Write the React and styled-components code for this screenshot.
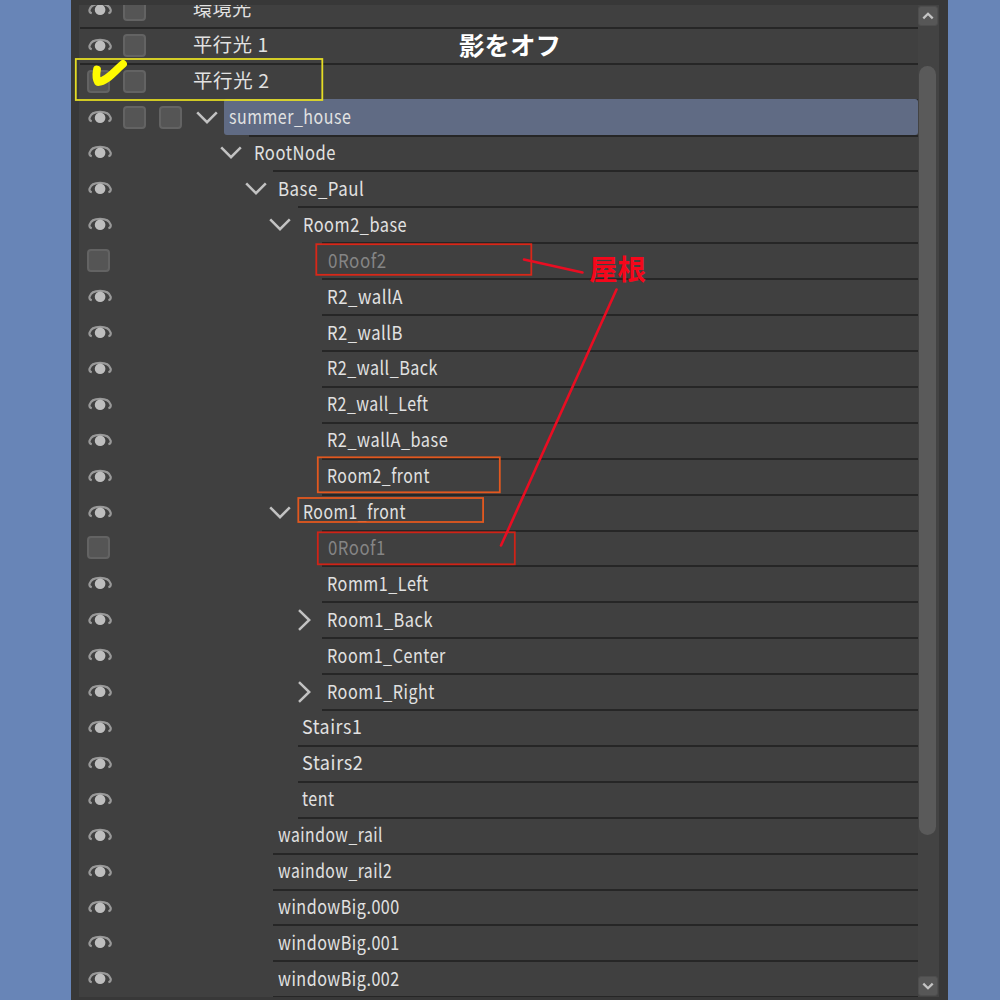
import React, { useLayoutEffect, useRef } from "react";
import styled, { createGlobalStyle } from "styled-components";

const ROW = 35.91;

const GlobalStyle = createGlobalStyle`
  html, body { margin: 0; padding: 0; background: #6885b7; }
  * { box-sizing: border-box; }
`;

const Page = styled.main`
  position: relative;
  width: 1000px;
  height: 1000px;
  overflow: hidden;
  background: #6885b7;
  padding: 0 52px 0 71px;
  font-family: "Noto Sans CJK JP", sans-serif;
`;

const Panel = styled.section`
  display: flex;
  height: 1000px;
  padding: 5px 9px 3px 8px;
  background: #383838;
`;

const Viewport = styled.div`
  flex: 1;
  overflow: hidden;
  background: #404040;
`;

const List = styled.div`
  display: flex;
  flex-direction: column;
  margin-top: -13.1px;
`;

const Row = styled.div`
  display: flex;
  flex: none;
  height: ${ROW}px;
`;

const Toggles = styled.div`
  display: flex;
  align-items: center;
  gap: 13px;
  padding: 0 0 1px 8px;
  width: ${(p) => p.$width}px;
  flex: none;
`;

const Box = styled.span`
  width: 23px;
  height: 23px;
  border: 2px solid #636363;
  border-radius: 4px;
  background: #555;
`;

const EyeIcon = styled.svg`
  width: 25px;
  height: 23px;
  margin-right: -2px;
`;

const Branch = styled.div`
  display: flex;
  align-items: center;
  justify-content: flex-end;
  width: ${(p) => p.$width}px;
  flex: none;
  padding: 0 ${(p) => (p.$fold === "right" ? 11 : 6.5)}px 1px 0;
`;

const Name = styled.div`
  position: relative;
  flex: 1;
  display: flex;
  align-items: center;
  margin: ${(p) => (p.$selected ? "-1px 0 1px" : "0")};
  padding-left: 5px;
  padding-bottom: ${(p) => (p.$selected ? 1 : 3)}px;
  border-radius: 3px;
  background: ${(p) => (p.$selected ? "#606b84" : "transparent")};
  color: ${(p) => (p.$dim ? "#858585" : "#e2e2e2")};
`;

const Rule = styled.span`
  position: absolute;
  right: 0;
  bottom: ${(p) => (p.$selected ? -2 : -1)}px;
  left: ${(p) => p.$left}px;
  height: 2px;
  background: #262626;
`;

const LabelText = styled.span`
  display: inline-block;
  transform-origin: 0 50%;
  font-size: 19px;
  line-height: 30px;
  font-weight: 400;
  letter-spacing: 0.6px;
  white-space: pre;
`;

const ScrollBar = styled.aside`
  display: flex;
  flex-direction: column;
  width: 21px;
  background: #434343;
  padding: 1px 1px 1px 0;
`;

const ScrollButton = styled.button`
  display: flex;
  align-items: center;
  justify-content: center;
  width: 20px;
  height: 20px;
  padding: 0;
  border: 1px solid #4e4e4e;
  border-radius: 3px;
  background: #575757;
`;

const Track = styled.div`
  flex: 1;
  padding: 40px 2px 141px 1px;
`;

const Thumb = styled.div`
  height: 100%;
  border-radius: 9px;
  background: #5a5a5a;
`;

const Overlay = styled.svg`
  position: absolute;
  inset: 0;
  width: 1000px;
  height: 1000px;
`;

const Note = styled.span`
  position: absolute;
  left: ${(p) => p.$x}px;
  top: ${(p) => p.$y}px;
  font-size: ${(p) => p.$size}px;
  line-height: 36px;
  font-weight: 700;
  color: ${(p) => p.$color};
  white-space: nowrap;
`;

/* x: left of the text, w: text width, line: left of the divider */
const rows = [
  { t: "環境光", x: 193, w: 59, line: 80, boxes: 1 },
  { t: "平行光 1", x: 193, w: 76, line: 80, boxes: 1 },
  { t: "平行光 2", x: 193, w: 77, line: 80, boxes: 1, off: true },
  { t: "summer_house", x: 229, w: 122, line: 249, boxes: 2, fold: "down", selected: true },
  { t: "RootNode", x: 253.5, w: 82, line: 273, fold: "down" },
  { t: "Base_Paul", x: 278, w: 86, line: 298, fold: "down" },
  { t: "Room2_base", x: 302.5, w: 104, line: 322, fold: "down" },
  { t: "0Roof2", x: 327.5, w: 59, line: 322, off: true, dim: true },
  { t: "R2_wallA", x: 327, w: 76, line: 322 },
  { t: "R2_wallB", x: 327, w: 76, line: 322 },
  { t: "R2_wall_Back", x: 327, w: 111, line: 322 },
  { t: "R2_wall_Left", x: 327, w: 102, line: 322 },
  { t: "R2_wallA_base", x: 327, w: 121, line: 322 },
  { t: "Room2_front", x: 327, w: 103, line: 322 },
  { t: "Room1_front", x: 302.5, w: 103, line: 322, fold: "down" },
  { t: "0Roof1", x: 327.5, w: 58, line: 322, off: true, dim: true },
  { t: "Romm1_Left", x: 327, w: 102, line: 322 },
  { t: "Room1_Back", x: 327, w: 106, line: 322, fold: "right" },
  { t: "Room1_Center", x: 327, w: 119, line: 322 },
  { t: "Room1_Right", x: 327, w: 108, line: 322, fold: "right" },
  { t: "Stairs1", x: 301.5, w: 60, line: 298 },
  { t: "Stairs2", x: 301.5, w: 61, line: 298 },
  { t: "tent", x: 302, w: 33, line: 298 },
  { t: "waindow_rail", x: 277.5, w: 105, line: 273 },
  { t: "waindow_rail2", x: 277.5, w: 114, line: 273 },
  { t: "windowBig.000", x: 277.5, w: 122, line: 273 },
  { t: "windowBig.001", x: 277.5, w: 122, line: 273 },
  { t: "windowBig.002", x: 277.5, w: 122, line: 273 },
];

function Label({ text, width }) {
  const ref = useRef(null);
  useLayoutEffect(() => {
    const el = ref.current;
    el.style.transform = `scaleX(${width / el.offsetWidth})`;
  }, [text, width]);
  return <LabelText ref={ref}>{text}</LabelText>;
}

const Eye = () => (
  <EyeIcon viewBox="0 0 25 23" fill="none">
    <path
      d="M4.8 15.3C2.8 14.8 2.1 13.2 2.6 11.6C3.7 8 8 5.9 13.1 5.9S22.5 8 23.6 11.6C24.1 13.2 23.4 14.8 21.4 15.3"
      stroke="#999"
      strokeWidth="2.2"
    />
    <circle cx="13.1" cy="11.7" r="5.3" fill="#bebebe" />
  </EyeIcon>
);

const Fold = ({ dir }) =>
  dir === "down" ? (
    <svg width="22" height="13" viewBox="0 0 22 13" fill="none">
      <path d="M1.2 1.3L11 11.2L20.8 1.3" stroke="#c2c2c2" strokeWidth="2.5" />
    </svg>
  ) : (
    <svg width="13" height="22" viewBox="0 0 13 22" fill="none">
      <path d="M1 1.2L11.2 11L1 20.8" stroke="#c2c2c2" strokeWidth="2.5" />
    </svg>
  );

const Arrow = ({ up }) => (
  <svg width="12" height="8" viewBox="0 0 12 8" fill="none">
    <path d={up ? "M1.3 6.4L6 1.8L10.7 6.4" : "M1.3 1.6L6 6.2L10.7 1.6"} stroke="#c4c4c4" strokeWidth="2.3" />
  </svg>
);

function TreeRow({ row }) {
  const toggles = row.boxes === 2 ? 104 : 68;
  const nameLeft = row.x - 5 - 79;
  return (
    <Row>
      <Toggles $width={toggles}>
        {row.off ? <Box /> : <Eye />}
        {row.boxes >= 1 && <Box />}
        {row.boxes === 2 && <Box />}
      </Toggles>
      <Branch $width={nameLeft - toggles} $fold={row.fold}>
        {row.fold && <Fold dir={row.fold} />}
      </Branch>
      <Name $selected={row.selected} $dim={row.dim}>
        <Label text={row.t} width={row.w} />
        <Rule $selected={row.selected} $left={row.line - 79 - nameLeft} />
      </Name>
    </Row>
  );
}

export default function App() {
  return (
    <>
      <GlobalStyle />
      <Page>
        <Panel>
          <Viewport>
            <List>
              {rows.map((row) => (
                <TreeRow key={row.t} row={row} />
              ))}
            </List>
          </Viewport>
          <ScrollBar>
            <ScrollButton aria-label="up"><Arrow up /></ScrollButton>
            <Track><Thumb /></Track>
            <ScrollButton aria-label="down"><Arrow /></ScrollButton>
          </ScrollBar>
        </Panel>
        <Overlay viewBox="0 0 1000 1000" fill="none">
          <rect x="75.8" y="59" width="246.5" height="41" stroke="#e4dc25" strokeWidth="1.8" />
          <path d="M97 69.5C96 75 96 79 98 82C107 81.5 114 71.5 123 64" stroke="#fffb00" strokeWidth="7.8" strokeLinecap="round" strokeLinejoin="round" />
          <g strokeWidth="1.8">
            <rect x="316.3" y="244.2" width="215" height="30.6" stroke="#d92718" />
            <rect x="317.8" y="457.3" width="182" height="35" stroke="#e2581f" />
            <rect x="298.3" y="498" width="184.8" height="24" stroke="#e2581f" />
            <rect x="317.8" y="532.3" width="197" height="32" stroke="#d02317" />
          </g>
          <g stroke="#e90d22" strokeWidth="2.6" strokeLinecap="round">
            <path d="M524 259.5L582.5 272.5" />
            <path d="M616.5 289.5L501 545.5" />
          </g>
        </Overlay>
        <Note $x={459} $y={26} $size={25.5} $color="#fff">影をオフ</Note>
        <Note $x={589} $y={250} $size={28.5} $color="#f5071b">屋根</Note>
      </Page>
    </>
  );
}
